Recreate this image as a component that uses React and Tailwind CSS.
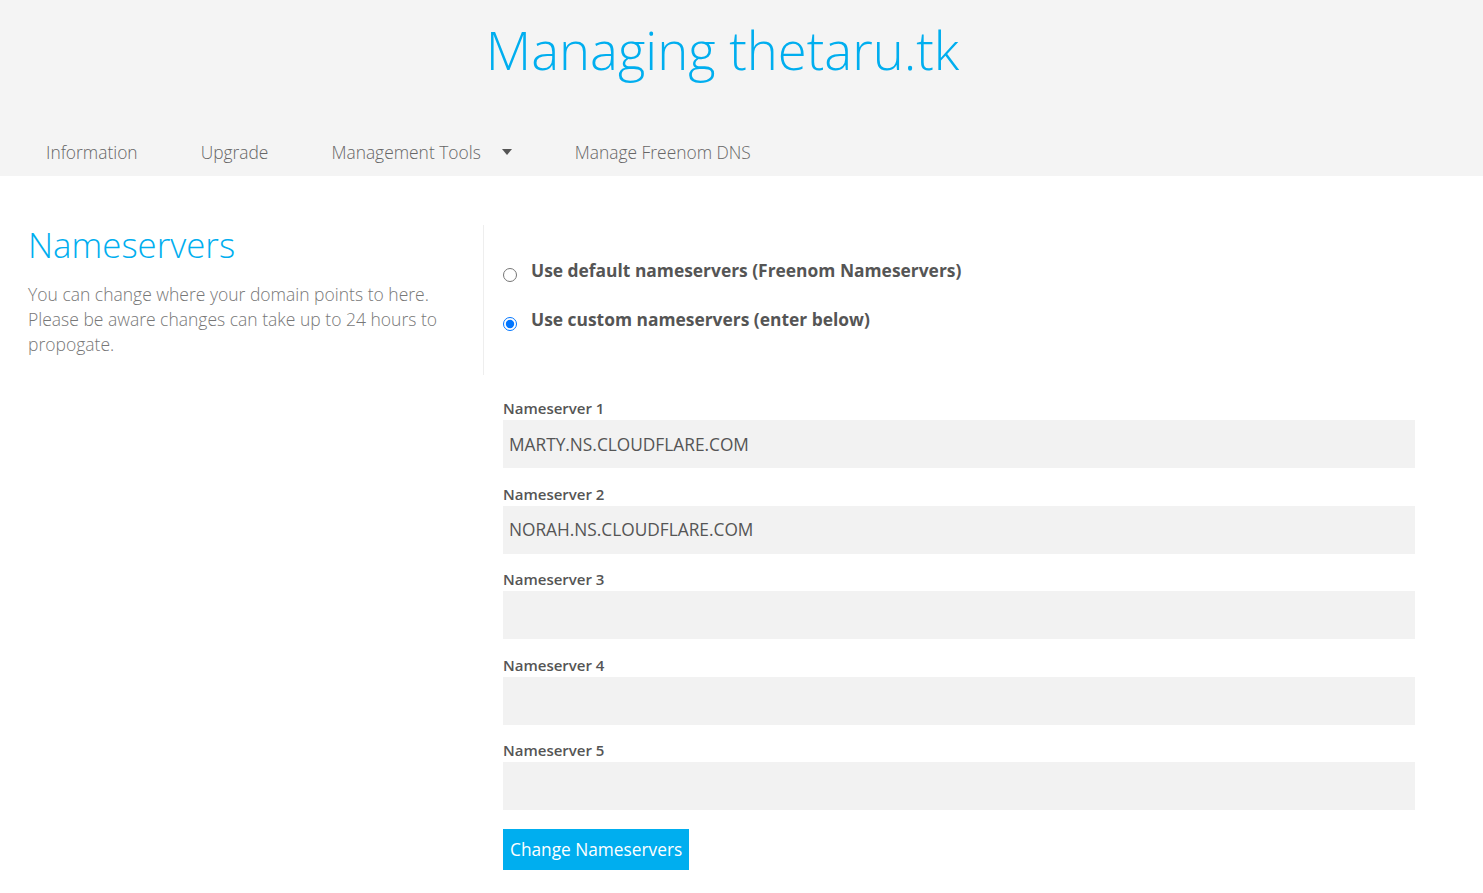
export default function App() {
  const font = { fontFamily: '"Open Sans", "Liberation Sans", sans-serif' };
  const fields = [
    { label: "Nameserver 1", value: "MARTY.NS.CLOUDFLARE.COM" },
    { label: "Nameserver 2", value: "NORAH.NS.CLOUDFLARE.COM" },
    { label: "Nameserver 3", value: "" },
    { label: "Nameserver 4", value: "" },
    { label: "Nameserver 5", value: "" },
  ];
  return (
    <div className="min-h-[893px] bg-white" style={font}>
      <header className="bg-[#f4f4f4]">
        <h1 className="pt-[12px] pr-[38px] text-center text-[52.6px] font-light leading-[76px] text-[#00aeef]">
          Managing thetaru.tk
        </h1>
        <nav className="mt-[40px] flex h-[48px] items-center pl-[46px] text-[17.4px] font-light text-[#666]">
          <span>Information</span>
          <span className="ml-[63px]">Upgrade</span>
          <span className="ml-[63px] flex items-center">
            Management Tools
            <svg className="ml-[21px]" width="10" height="6" viewBox="0 0 10 6">
              <path d="M0 0h10L5 6z" fill="#555" />
            </svg>
          </span>
          <span className="ml-[63px]">Manage Freenom DNS</span>
        </nav>
      </header>

      <div className="flex pt-[49px]">
        <div className="w-[483px] pl-[28px] pr-[30px]">
          <h2 className="text-[34.8px] font-light leading-[40px] text-[#00aeef]">Nameservers</h2>
          <p className="mt-[17px] text-[17.5px] font-light leading-[25px] text-[#777]">
            You can change where your domain points to here. Please be aware changes can take up to 24 hours to propogate.
          </p>
        </div>
        <div className="h-[150px] border-l border-[#eee] pl-[19px] pt-[32px]">
          <label className="flex items-center text-[17.4px] font-bold text-[#555]">
            <input type="radio" name="ns" className="m-0 mr-[14px] mt-[9px] h-[14px] w-[14px]" />
            Use default nameservers (Freenom Nameservers)
          </label>
          <label className="mt-[23px] flex items-center text-[17.4px] font-bold text-[#555]">
            <input type="radio" name="ns" defaultChecked className="m-0 mr-[14px] mt-[9px] h-[14px] w-[14px]" />
            Use custom nameservers (enter below)
          </label>
        </div>
      </div>

      <div className="ml-[503px] w-[912px] pt-[23px]">
        {fields.map((f, i) => (
          <div key={i} className={i === 0 ? "" : "mt-[15.5px]"}>
            <div className="text-[15px] font-semibold leading-[20px] text-[#555]">{f.label}</div>
            <input
              type="text"
              defaultValue={f.value}
              className="mt-[2px] block h-[48px] w-full bg-[#f2f2f2] px-[6px] text-[17.3px] text-[#555] outline-none"
            />
          </div>
        ))}
        <button className="mt-[19px] h-[41px] bg-[#00aeef] px-[7px] text-[17.3px] text-white">
          Change Nameservers
        </button>
      </div>
    </div>
  );
}
